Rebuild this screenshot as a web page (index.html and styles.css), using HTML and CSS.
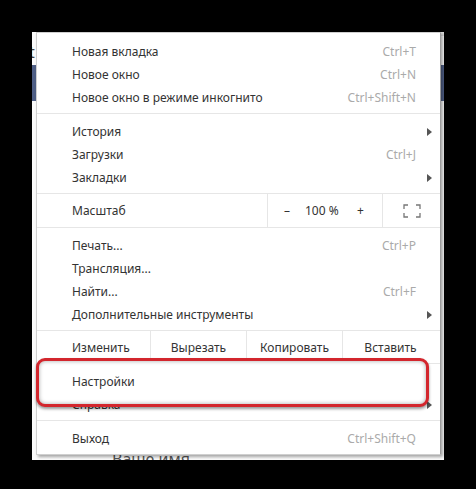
FILE: index.html
```html
<!DOCTYPE html>
<html lang="ru">
<head>
    <meta charset="UTF-8">
    <title>Меню</title>
    <link rel="stylesheet" href="styles.css">
</head>
<body>
    <!-- Browser window behind the menu -->
    <div class="screen">
        <span class="page-t">t</span>
        <div class="page-bar-left"></div>
        <div class="page-bar-right"></div>
        <div class="page-top"><span class="page-top-dot"></span></div>
        <div class="page-name">Ваше имя</div>

        <!-- Menu -->
        <div class="menu">
            <div class="group group-first">
                <div class="row"><span class="label">Новая вкладка</span><span class="key">Ctrl+T</span><span class="arrow-cell"></span></div>
                <div class="row"><span class="label">Новое окно</span><span class="key">Ctrl+N</span><span class="arrow-cell"></span></div>
                <div class="row"><span class="label">Новое окно в режиме инкогнито</span><span class="key">Ctrl+Shift+N</span><span class="arrow-cell"></span></div>
            </div>
            <div class="group">
                <div class="row"><span class="label">История</span><span class="key"></span><span class="arrow-cell"><i class="arrow"></i></span></div>
                <div class="row"><span class="label">Загрузки</span><span class="key">Ctrl+J</span><span class="arrow-cell"></span></div>
                <div class="row"><span class="label">Закладки</span><span class="key"></span><span class="arrow-cell"><i class="arrow"></i></span></div>
            </div>
            <div class="zoom-row">
                <div class="zoom-label">Масштаб</div>
                <div class="zoom-ctrl">
                    <span class="zoom-minus">–</span>
                    <span class="zoom-value">100 %</span>
                    <span class="zoom-plus">+</span>
                </div>
                <div class="zoom-full">
                    <svg width="18" height="14" viewBox="0 0 18 14">
                        <path d="M1 5V1h4M13 1h4v4M17 9v4h-4M5 13H1V9" fill="none" stroke="#777" stroke-width="1.3"/>
                    </svg>
                </div>
            </div>
            <div class="group">
                <div class="row"><span class="label">Печать...</span><span class="key">Ctrl+P</span><span class="arrow-cell"></span></div>
                <div class="row"><span class="label">Трансляция...</span><span class="key"></span><span class="arrow-cell"></span></div>
                <div class="row"><span class="label">Найти...</span><span class="key">Ctrl+F</span><span class="arrow-cell"></span></div>
                <div class="row"><span class="label">Дополнительные инструменты</span><span class="key"></span><span class="arrow-cell"><i class="arrow"></i></span></div>
            </div>
            <div class="edit-row">
                <div class="edit-label">Изменить</div>
                <div class="edit-btn">Вырезать</div>
                <div class="edit-btn">Копировать</div>
                <div class="edit-btn">Вставить</div>
            </div>
            <div class="group">
                <!-- highlighted item, red frame drawn by ::before -->
                <div class="row row-marked"><span class="label">Настройки</span><span class="key"></span><span class="arrow-cell"></span></div>
                <div class="row"><span class="label">Справка</span><span class="key"></span><span class="arrow-cell"><i class="arrow"></i></span></div>
            </div>
            <div class="group group-last">
                <div class="row"><span class="label">Выход</span><span class="key">Ctrl+Shift+Q</span><span class="arrow-cell"></span></div>
            </div>
        </div>
    </div>
</body>
</html>
```

FILE: styles.css
```css
* {
    margin: 0;
    padding: 0;
    box-sizing: border-box;
}

body {
    background: #000;
    width: 476px;
    height: 489px;
    font-family: 'Noto Sans', 'Open Sans', sans-serif;
    font-size: 12px;
    color: #333;
    overflow: hidden;
}

/* Page behind */
.screen {
    position: relative;
    margin: 32px 0 0 32px;
    width: 412px;
    height: 428px;
    background: #fbfbfb;
    overflow: hidden;
}

.page-t {
    position: absolute;
    left: -3px;
    top: 9px;
    font-size: 16px;
    color: #444;
}

.page-bar-left {
    position: absolute;
    left: 0;
    top: 33px;
    width: 4px;
    height: 36px;
    background: #4f5f86;
}

.page-bar-right {
    position: absolute;
    right: 0;
    top: 33px;
    width: 3px;
    height: 36px;
    background: #4f5f86;
}

.page-top {
    position: absolute;
    left: 246px;
    top: 0;
    right: 0;
    height: 4px;
    background: #d9d9d9;
}

.page-top-dot {
    position: absolute;
    left: 55px;
    top: 0;
    width: 9px;
    height: 4px;
    background: #555;
}

.page-name {
    position: absolute;
    left: 80px;
    top: 416px;
    font-size: 16px;
    color: #555;
}

/* Menu */
.menu {
    position: relative;
    margin-left: 4px;
    width: 405px;
    height: 423px;
    background: #fff;
    border: 1px solid #cfcfcf;
    border-right-color: #9a9a9a;
    box-shadow: 2px 2px 3px rgba(0, 0, 0, 0.35);
    display: flex;
    flex-direction: column;
}

.group {
    padding: 6px 0 4px;
    border-bottom: 1px solid #e6e6e6;
}

.group-first {
    padding-top: 7px;
}

.group-last {
    border-bottom: none;
    padding-bottom: 0;
}

.row {
    display: flex;
    align-items: center;
    height: 23px;
    padding-left: 35px;
}

.label {
    flex: 1;
}

.key {
    color: #aaa;
}

.arrow-cell {
    width: 24px;
    display: flex;
    justify-content: center;
    align-items: center;
}

.arrow {
    width: 0;
    height: 0;
    border-top: 4px solid transparent;
    border-bottom: 4px solid transparent;
    border-left: 5px solid #555;
    margin-left: 2px;
}

/* Zoom */
.zoom-row {
    display: flex;
    height: 34px;
    border-bottom: 1px solid #e6e6e6;
}

.zoom-label {
    width: 230px;
    padding-left: 35px;
    display: flex;
    align-items: center;
}

.zoom-ctrl {
    width: 115px;
    border-left: 1px solid #e6e6e6;
    display: flex;
    align-items: center;
}

.zoom-minus {
    margin-left: 16px;
    width: 10px;
}

.zoom-value {
    margin-left: 11px;
    width: 42px;
}

.zoom-plus {
    margin-left: 10px;
}

.zoom-full {
    flex: 1;
    border-left: 1px solid #e6e6e6;
    display: flex;
    align-items: center;
    justify-content: center;
    padding-top: 1px;
}

/* Edit */
.edit-row {
    display: flex;
    height: 33px;
    border-bottom: 1px solid #e6e6e6;
}

.edit-label {
    width: 113px;
    padding-left: 35px;
    display: flex;
    align-items: center;
}

.edit-btn {
    width: 96px;
    border-left: 1px solid #e6e6e6;
    display: flex;
    align-items: center;
    justify-content: center;
}

/* Red frame round "Настройки" */
.row-marked {
    position: relative;
    z-index: 1;
}

.row-marked::before {
    content: "";
    position: absolute;
    z-index: -1;
    left: -1px;
    top: -12px;
    width: 387px;
    height: 43px;
    background: #fff;
    border: 3px solid #d3262d;
    border-radius: 9px;
    box-shadow: 0 2px 3px rgba(0, 0, 0, 0.4), inset 0 0 4px rgba(0, 0, 0, 0.35);
}
```
